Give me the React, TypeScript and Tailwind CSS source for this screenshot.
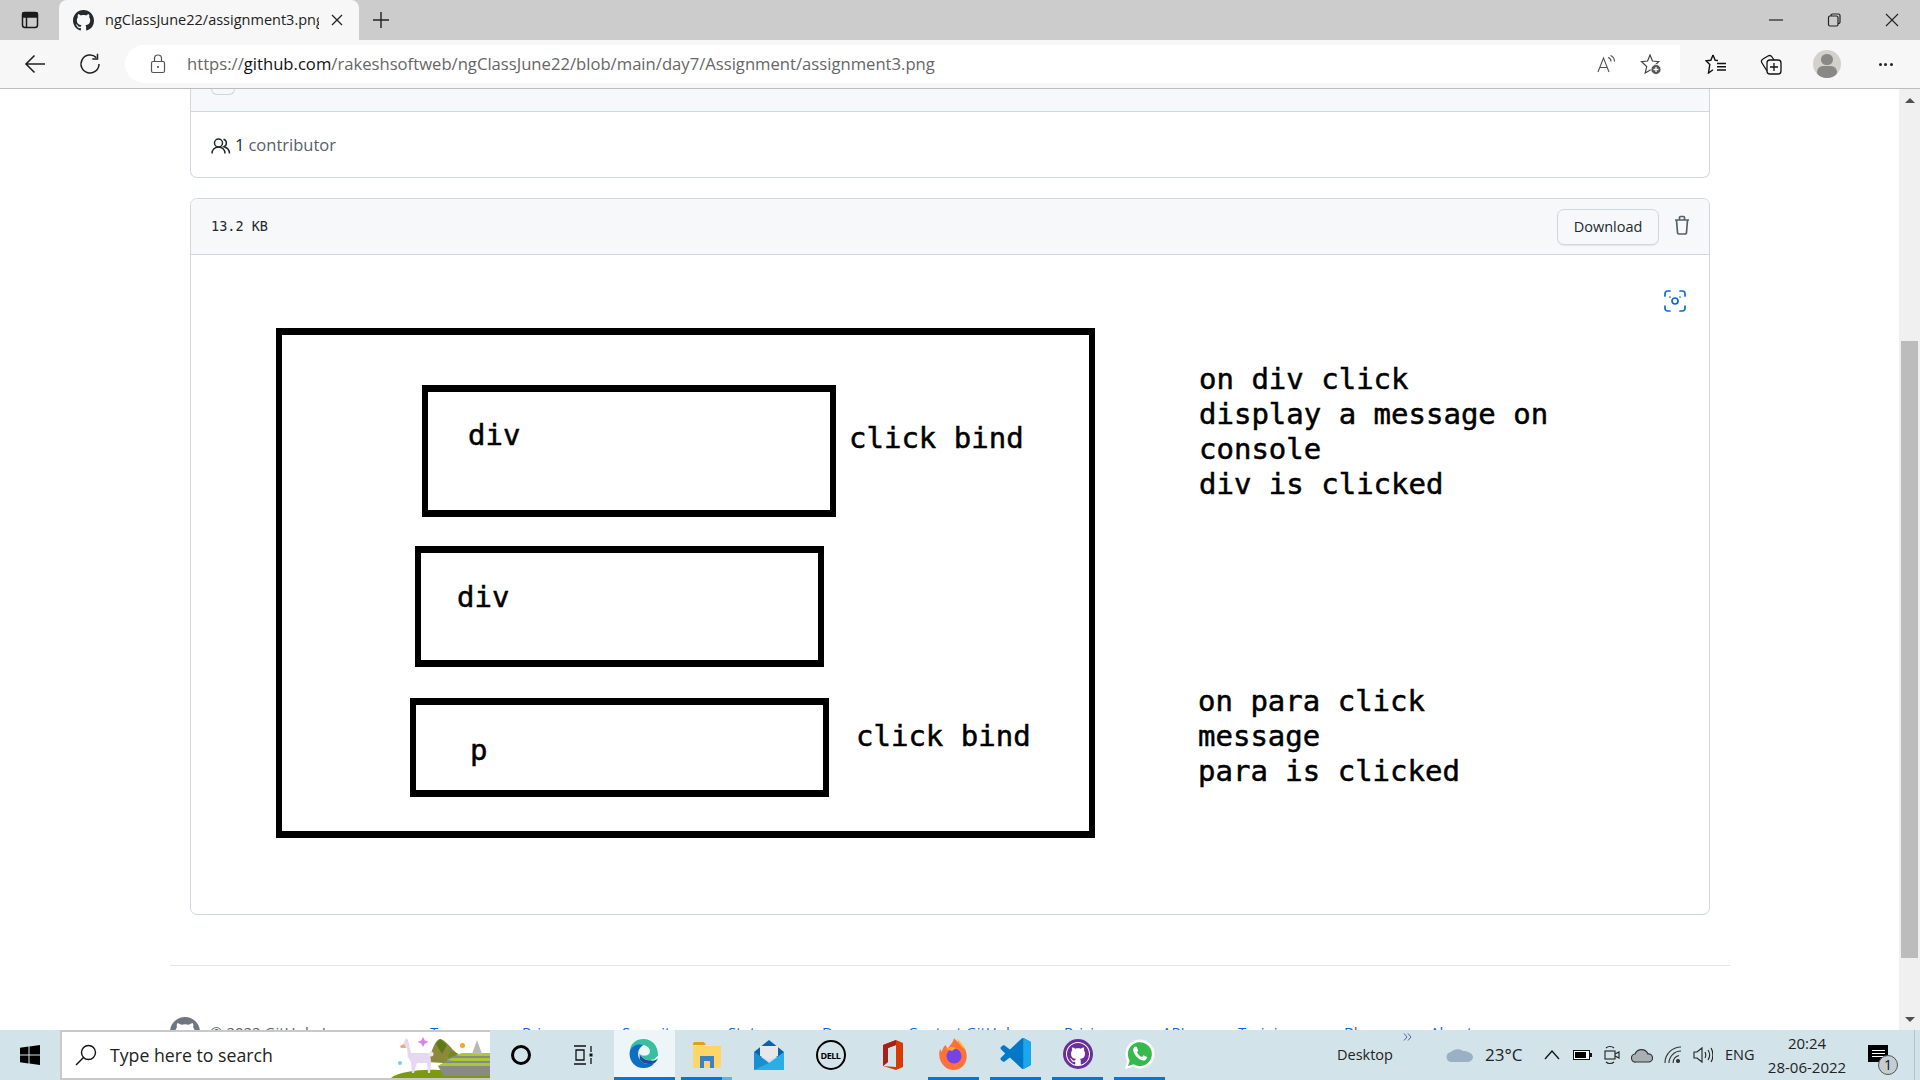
import React from "react";

const sans = "font-['Open_Sans','Noto_Sans',sans-serif]";

function WinBtn({ w, children }: { w: string; children: React.ReactNode }) {
  return <div className={`${w} h-10 flex items-center justify-center`}>{children}</div>;
}

function GithubMark({ size, color }: { size: number; color: string }) {
  return (
    <svg width={size} height={size} viewBox="0 0 16 16" fill={color}>
      <path d="M8 0C3.58 0 0 3.58 0 8c0 3.54 2.29 6.53 5.47 7.59.4.07.55-.17.55-.38 0-.19-.01-.82-.01-1.49-2.01.37-2.53-.49-2.69-.94-.09-.23-.48-.94-.82-1.13-.28-.15-.68-.52-.01-.53.63-.01 1.08.58 1.23.82.72 1.21 1.87.87 2.33.66.07-.52.28-.87.51-1.07-1.78-.2-3.64-.89-3.64-3.95 0-.87.31-1.59.82-2.15-.08-.2-.36-1.02.08-2.12 0 0 .67-.21 2.2.82.64-.18 1.32-.27 2-.27s1.36.09 2 .27c1.53-1.04 2.2-.82 2.2-.82.44 1.1.16 1.92.08 2.12.51.56.82 1.27.82 2.15 0 3.07-1.87 3.75-3.65 3.95.29.25.54.73.54 1.48 0 1.07-.01 1.93-.01 2.2 0 .21.15.46.55.38A8.01 8.01 0 0 0 16 8c0-4.42-3.58-8-8-8z" />
    </svg>
  );
}

function TabStrip() {
  return (
    <div className="h-10 bg-[#cccccc] flex shrink-0">
      <div className="w-[59px] flex items-center justify-center">
        <svg width="20" height="20" viewBox="0 0 20 20" fill="none" stroke="#1a1a1a" strokeWidth="1.5">
          <rect x="2.5" y="2.5" width="15" height="15" rx="2.5" />
          <path d="M3 3h14v4H3z" fill="#1a1a1a" />
          <path d="M6.5 7v10" />
        </svg>
      </div>
      <div className="w-[300px] h-10 bg-[#f7f7f7] rounded-t-lg flex items-center pl-[14px]">
        <GithubMark size={21} color="#24292f" />
        <span className={`ml-[11px] w-[214px] overflow-hidden whitespace-nowrap text-[14.5px] text-[#222] ${sans}`}>
          ngClassJune22/assignment3.png
        </span>
        <svg className="ml-[12px]" width="12" height="12" viewBox="0 0 12 12" stroke="#222" strokeWidth="1.3">
          <path d="M1 1l10 10M11 1L1 11" />
        </svg>
      </div>
      <div className="ml-[13px] w-[18px] flex items-center">
        <svg width="18" height="18" viewBox="0 0 18 18" stroke="#222" strokeWidth="1.4">
          <path d="M9 1v16M1 9h16" />
        </svg>
      </div>
      <div className="flex-1" />
      <div className="flex">
        <WinBtn w="w-[58px]">
          <svg width="14" height="2" viewBox="0 0 14 2"><path d="M0 1h14" stroke="#222" strokeWidth="1.2" /></svg>
        </WinBtn>
        <WinBtn w="w-[58px]">
          <svg width="14" height="14" viewBox="0 0 14 14" fill="none" stroke="#222" strokeWidth="1.2">
            <rect x="1.5" y="3" width="9.5" height="10" rx="1.5" />
            <path d="M4 3V2.5A1.5 1.5 0 0 1 5.5 1h6A1.5 1.5 0 0 1 13 2.5V9a1.5 1.5 0 0 1-2 1.4" />
          </svg>
        </WinBtn>
        <WinBtn w="w-[57px]">
          <svg width="14" height="14" viewBox="0 0 14 14" stroke="#222" strokeWidth="1.1"><path d="M1 1l12 12M13 1L1 13" /></svg>
        </WinBtn>
      </div>
    </div>
  );
}

function Toolbar() {
  return (
    <div className="h-[49px] bg-[#f7f7f7] border-b border-[#bdbdbd] flex items-center shrink-0">
      <div className="w-[70px] flex justify-center">
        <svg width="22" height="20" viewBox="0 0 22 20" fill="none" stroke="#222" strokeWidth="1.6">
          <path d="M21 10H2M10.5 1.5 2 10l8.5 8.5" />
        </svg>
      </div>
      <div className="w-[40px] flex justify-center">
        <svg width="22" height="22" viewBox="0 0 22 22" fill="none" stroke="#222" strokeWidth="1.5">
          <path d="M20 11a9 9 0 1 1-2.700-6.400" />
          <path d="M18.500 .8v5.200h-5.200" />
        </svg>
      </div>
      <div className="ml-[15px] w-[1555px] h-[38px] bg-white rounded-l-full rounded-r-[19px] flex items-center">
        <div className="w-[62px] flex justify-end pr-[21px]">
          <svg width="16" height="20" viewBox="0 0 16 20" fill="none" stroke="#555" strokeWidth="1.2">
            <rect x="1.5" y="7.500" width="13" height="11" rx="1.500" />
            <path d="M4.500 7.500V4.500a3.500 3.500 0 0 1 7 0v3" />
            <circle cx="8" cy="13" r="1" fill="#444" stroke="none" />
          </svg>
        </div>
        <span className={`text-[16.650px] text-[#666] whitespace-nowrap ${sans}`}>
          https://<span className="text-[#111]">github.com</span>/rakeshsoftweb/ngClassJune22/blob/main/day7/Assignment/assignment3.png
        </span>
        <div className="flex-1" />
        <svg width="20" height="18" viewBox="0 0 20 18" fill="none" stroke="#555" strokeWidth="1.100">
          <path d="M1 17 6.500 3l5.500 14M2.800 12.500h7.400" />
          <path d="M11 2.500c2 .5 3 2 3 4M13.500 .5c2.500 1 4 3.500 4 6" />
        </svg>
        <svg className="ml-[23px] mr-[18px]" width="22" height="21" viewBox="0 0 22 21" fill="none" stroke="#444" strokeWidth="1.200">
          <path d="M10 1 12.500 7l6.300.6-4.600 4.200 1 3-4.500 1-5.500 3.200 1.500-6.500L1.500 7.700 7.600 7z" />
          <circle cx="16" cy="15.500" r="5" fill="#555" stroke="#fff" strokeWidth=".8" />
          <path d="M16 13v5M13.500 15.500h5" stroke="#fff" strokeWidth="1.300" />
        </svg>
      </div>
      <div className="w-[58px] ml-[7px] flex justify-center">
        <svg width="22" height="20" viewBox="0 0 22 20" fill="none" stroke="#111" strokeWidth="1.400">
          <path d="M8 1 10.200 6.300l2.800.2M8 1 5.800 6.300 1 6.800l3.800 3.700L3.500 19 8 15.800" />
          <path d="M12 9.500h9M12 12.800h9M12 16h9" />
        </svg>
      </div>
      <div className="w-[52px] flex justify-center">
        <svg width="22" height="21" viewBox="0 0 22 21" fill="none" stroke="#111" strokeWidth="1.300">
          <rect x="7" y="6" width="14" height="14" rx="3" />
          <path d="M7 17 2 9c-1-1.500-.8-3 1-4l5-3c1.500-.8 3-.5 4 1l2 3" />
          <path d="M14 9v8M10 13h8" />
        </svg>
      </div>
      <div className="w-[60px] flex justify-center">
        <div className="w-[28px] h-[28px] rounded-full bg-[#d3d1cc] overflow-hidden flex flex-col items-center">
          <div className="mt-[4px] w-[12px] h-[12px] rounded-full bg-[#8a8886]" />
          <div className="mt-[1px] w-[20px] h-[14px] rounded-full bg-[#8a8886]" />
        </div>
      </div>
      <div className="flex-1 flex justify-center gap-[2.500px] pr-[6px]">
        <div className="w-[3px] h-[3px] rounded-full bg-[#222]" />
        <div className="w-[3px] h-[3px] rounded-full bg-[#222]" />
        <div className="w-[3px] h-[3px] rounded-full bg-[#222]" />
      </div>
    </div>
  );
}

function Diagram() {
  const mono = "font-['DejaVu_Sans_Mono',monospace] text-[29px] leading-[35px] text-black whitespace-pre [-webkit-text-stroke:0.5px_black]";
  const frame = "absolute border-x-[6px] border-y-[7px] border-black";
  return (
    <div className="relative h-[659px]">
      <div className={`${frame} left-[85px] top-[73px] w-[819px] h-[510px]`} />
      <div className={`${frame} left-[231px] top-[130px] w-[414px] h-[132px]`} />
      <div className={`${frame} left-[224px] top-[291px] w-[409px] h-[121px]`} />
      <div className={`${frame} left-[219px] top-[443px] w-[419px] h-[99px]`} />
      <div className={`absolute left-[277px] top-[163px] ${mono}`}>div</div>
      <div className={`absolute left-[266px] top-[325px] ${mono}`}>div</div>
      <div className={`absolute left-[279px] top-[478px] ${mono}`}>p</div>
      <div className={`absolute left-[658px] top-[166px] ${mono}`}>click bind</div>
      <div className={`absolute left-[665px] top-[464px] ${mono}`}>click bind</div>
      <div className={`absolute left-[1008px] top-[107px] ${mono}`}>
        {"on div click\ndisplay a message on\nconsole\ndiv is clicked"}
      </div>
      <div className={`absolute left-[1007px] top-[429px] ${mono}`}>
        {"on para click\nmessage\npara is clicked"}
      </div>
      <svg className="absolute left-[1473px] top-[35px]" width="22" height="22" viewBox="0 0 22 22" fill="none" stroke="#0969da" strokeWidth="1.700" strokeLinecap="round">
        <path d="M1 6V3.500A2.500 2.500 0 0 1 3.500 1H6M16 1h2.500A2.500 2.500 0 0 1 21 3.500V6M21 16v2.500a2.500 2.500 0 0 1-2.500 2.500H16M6 21H3.500A2.500 2.500 0 0 1 1 18.500V16" />
        <circle cx="11" cy="11" r="3" />
        <path d="M6 7v0M16 7v0" />
      </svg>
    </div>
  );
}

function Content() {
  const links = [
    ["Terms", "w-[92px]"],
    ["Privacy", "w-[100px]"],
    ["Security", "w-[106px]"],
    ["Status", "w-[94px]"],
    ["Docs", "w-[86px]"],
    ["Contact GitHub", "w-[156px]"],
    ["Pricing", "w-[98px]"],
    ["API", "w-[76px]"],
    ["Training", "w-[106px]"],
    ["Blog", "w-[86px]"],
    ["About", "w-[60px]"],
  ];
  return (
    <div className={`flex-1 bg-white overflow-hidden ${sans}`}>
      <div className="ml-[190px] w-[1520px] h-[89px] border-x border-b border-[#d0d7de] rounded-b-[7px]">
        <div className="h-[23px] bg-[#f6f8fa] border-b border-[#d0d7de] pl-[20px]">
          <div className="w-[24px] h-[6px] rounded-b-[12px] border border-t-0 border-[#d9d0e0]" />
        </div>
        <div className="h-[65px] pl-[20px] pt-[2px] flex items-center text-[16.500px] text-[#57606a]">
          <svg width="20" height="18" viewBox="0 0 20 18" fill="none" stroke="#24292f" strokeWidth="1.500">
            <circle cx="7.500" cy="6" r="4" />
            <path d="M1 16.500c0-4 3-6.500 6.500-6.500s6.500 2.500 6.500 6.500" />
            <path d="M12.500 2.200a4 4 0 0 1 .5 7.500c3 .8 5.500 3 5.500 6.800" />
          </svg>
          <span className="ml-[4px] font-medium text-[#24292f]">1</span>
          <span className="ml-[4px]">contributor</span>
        </div>
      </div>
      <div className="mt-[20px] ml-[190px] w-[1520px] h-[717px] border border-[#d0d7de] rounded-[7px] overflow-hidden">
        <div className="h-[56px] bg-[#f6f8fa] border-b border-[#d0d7de] flex items-center pl-[20px]">
          <span className="font-['DejaVu_Sans_Mono',monospace] text-[13.500px] text-[#24292f]">13.2 KB</span>
          <div className="flex-1" />
          <div className="w-[102px] h-[36px] border border-[#d0d7de] rounded-[7px] bg-[#f6f8fa] flex items-center justify-center text-[14.500px] font-medium text-[#24292f] shadow-[0_1px_0_rgba(27,31,36,0.08)]">
            Download
          </div>
          <svg className="ml-[15px] mr-[19px] mb-[3px]" width="16" height="20" viewBox="0 0 16 20" fill="none" stroke="#57606a" strokeWidth="1.700">
            <path d="M1 5h14M5.500 5V2.500A1 1 0 0 1 6.500 1.500h3a1 1 0 0 1 1 1V5M2.500 5l1 12.500A1.500 1.500 0 0 0 5 19h6a1.500 1.500 0 0 0 1.500-1.500L13.500 5" />
          </svg>
        </div>
        <Diagram />
      </div>
      <div className="mt-[50px] ml-[170px] w-[1560px] border-t border-[#dfe2e8]" />
      <div className="mt-[51px] ml-[170px] flex items-start">
        <div className="w-[40px]"><GithubMark size={30} color="#6e7781" /></div>
        <div className="w-[220px] mt-[4px] text-[15px] leading-[22px] text-[#57606a]">© 2022 GitHub, Inc.</div>
        <div className="flex mt-[4px] text-[15px] leading-[22px] text-[#0969da]">
          {links.map(([t, w]) => (
            <div key={t} className={`${w} whitespace-nowrap`}>{t}</div>
          ))}
        </div>
      </div>
    </div>
  );
}

function Scrollbar() {
  return (
    <div className="w-[21px] bg-[#f0f0f0] flex flex-col items-center">
      <div className="h-[22px] flex items-center justify-center">
        <div className="w-0 h-0 border-x-[5px] border-x-transparent border-b-[5px] border-b-[#505050]" />
      </div>
      <div className="mt-[230px] w-[17px] h-[617px] bg-[#bcbcbc]" />
      <div className="flex-1" />
      <div className="h-[22px] flex items-center justify-center">
        <div className="w-0 h-0 border-x-[5px] border-x-transparent border-t-[5px] border-t-[#505050]" />
      </div>
    </div>
  );
}

function AppCell({ w, children, under, active }: { w: string; children: React.ReactNode; under?: React.ReactNode; active?: boolean }) {
  return (
    <div className={`${w} h-[50px] flex flex-col items-center ${active ? "bg-[#eef5f8]" : ""}`}>
      <div className="flex-1 flex items-center justify-center">{children}</div>
      {under}
    </div>
  );
}

const Bar = () => <div className="w-full h-[3px] bg-[#0078d4]" />;

function Taskbar() {
  return (
    <div className={`h-[50px] bg-[#d3e3ea] flex items-stretch shrink-0 ${sans}`}>
      <div className="w-[60px] flex items-center justify-center">
        <svg width="20" height="20" viewBox="0 0 20 20" fill="#000">
          <path d="M0 2.800 8.500 1.600v8H0zM9.500 1.500 20 0v9.600H9.500zM0 10.500h8.500v8L0 17.200zM9.500 10.500H20V20L9.500 18.500z" />
        </svg>
      </div>
      <div className="w-[430px] bg-white border-2 border-[#c9c9c9] border-r-0 flex items-center overflow-hidden">
        <svg className="ml-[13px]" width="22" height="22" viewBox="0 0 22 22" fill="none" stroke="#111" strokeWidth="1.400">
          <circle cx="13.500" cy="8.500" r="7" />
          <path d="M8.500 13.500 1 21" />
        </svg>
        <span className="ml-[13px] text-[17.700px] text-[#222] whitespace-nowrap">Type here to search</span>
        <div className="flex-1" />
        <svg width="99" height="46" viewBox="-9 2 99 46" className="self-end">
          <path d="M-9 48C-2 42 20 39 38 40L90 38V48z" fill="#7c9a10" />
          <path d="M28 32 C32 20 35 10 40 9 C45 9 50 18 58 24V34z" fill="#8c8a3a" />
          <path d="M36 14 40 9 47 15 42 24z" fill="#5c7a18" />
          <path d="M50 20 58 24 56 32 48 30z" fill="#6f8a20" />
          <path d="M38 36 47 31V29L56 25 90 24V46H44z" fill="#8a8a84" />
          <path d="M56 25 62 23H90V26H60zM47 30 52 28H90V31H52zM38 36 44 33H90V36H44z" fill="#a8c83a" />
          <path d="M72 24 77 10 82 24z" fill="#b9b9b1" />
          <circle cx="62.500" cy="15.500" r="2.500" fill="#f5a623" />
          <path d="M23 7l1.800 3.500 3.700 1.500-3.700 1.500L23 17l-1.800-3.500-3.700-1.500 3.700-1.500z" fill="#d880ee" />
          <path d="M6 8l2 2 3 13h16l3 1 1 7-1 12h-2l-1-10-10 0-3 10H12l-1-11-3-5-1-9-4-1 1-4z" fill="#e6d8f0" />
          <circle cx="31" cy="24" r="2.500" fill="#efe6f4" />
          <path d="M0 16 4 14 6 18H1z" fill="#f4a76a" />
          <circle cx="0" cy="33" r="2" fill="#6fd3ee" />
        </svg>
      </div>
      <div className="w-[62px] flex items-center justify-center">
        <div className="w-[20px] h-[20px] rounded-full border-[3px] border-black" />
      </div>
      <div className="w-[62px] flex items-center justify-center">
        <svg width="20" height="20" viewBox="0 0 20 20" fill="none" stroke="#111" strokeWidth="1.300">
          <path d="M1 1h12M1 19h12M3 5h8v10H3zM18 1v6M18 13v6" />
          <rect x="16.500" y="8.500" width="3" height="3" fill="#111" stroke="none" />
        </svg>
      </div>
      <AppCell w="w-[61px]" active under={<Bar />}>
        <svg width="31" height="31" viewBox="0 0 32 32">
          <path d="M30 18C30 8 24 1 15 1 7 1 2 6 1 12c3-4 8-6 13-5 6 1 9 5 7 9-2 3-9 3-9 0 0 6 8 8 14 6z" fill="#35c1a0" />
          <path d="M1 13c-2 9 4 18 14 18 5 0 9-2 11-5-5 2-12 1-15-4-3-5-2-11 4-15C9 5 3 8 1 13z" fill="#0c6ec4" />
          <path d="M11 22c3 5 10 6 15 4 2-1 3-3 4-5-2 2-5 3-8 2-5 0-9-2-11-7z" fill="#1b4f9c" />
        </svg>
      </AppCell>
      <div className="w-[6px]" />
      <AppCell w="w-[51px]" under={<div className="w-full h-[3px] flex"><div className="w-[41px] bg-[#0078d4]" /><div className="flex-1 bg-[#69aee6]" /></div>}>
        <svg width="28" height="28" viewBox="0 0 28 28">
          <path d="M0 4a2 2 0 0 1 2-2h9l2 3H0z" fill="#e3a008" />
          <path d="M0 6h28v20a2 2 0 0 1-2 2H2a2 2 0 0 1-2-2z" fill="#fcd667" />
          <path d="M7 16h14v12h-4v-7h-6v7H7z" fill="#3b82c4" />
        </svg>
      </AppCell>
      <div className="w-[11px]" />
      <AppCell w="w-[51px]">
        <svg width="30" height="30" viewBox="0 0 30 30">
          <path d="M0 12 15 0l15 12v5H0z" fill="#0b62ad" />
          <path d="M6 6h18v10L15 20 6 16z" fill="#e8e8e8" />
          <path d="M0 12l15 11L30 12v18H0z" fill="#29aee8" />
          <path d="M0 30V12l15 11z" fill="#1a8ed2" />
        </svg>
      </AppCell>
      <div className="w-[11px]" />
      <AppCell w="w-[51px]">
        <div className="w-[30px] h-[30px] rounded-full border-2 border-black bg-transparent flex items-center justify-center font-bold text-[9px] leading-none tracking-[-0.5px] text-black">DELL</div>
      </AppCell>
      <div className="w-[11px]" />
      <AppCell w="w-[51px]">
        <svg width="24" height="30" viewBox="0 0 24 30">
          <path d="M2 5 15 0l7 3v24l-7 3-13-4 13 1V5L7 8v14l-5 4z" fill="#d83b01" />
          <path d="M2 5 15 0v5L7 8v14l-5 4z" fill="#a3211a" />
        </svg>
      </AppCell>
      <div className="w-[10px]" />
      <AppCell w="w-[51px]" under={<Bar />}>
        <svg width="30" height="36" viewBox="0 0 30 36">
          <path d="M15 2c2 3 8 6 11 11 3 6 2 13-2 17-5 5-13 5-18 1C1 27-1 20 1 13c1 1 1 2 2 3 0-3 2-6 4-7 0 2 1 3 2 3 2-3 5-5 6-10z" fill="#ff7139" />
          <path d="M18 2c3 4 8 8 9 14 0-2-2-4-4-5-2-3-4-5-5-9z" fill="#ffbd2e" />
          <circle cx="15" cy="20" r="7.500" fill="#7542e5" />
          <path d="M7 13c3-2 7-3 10-1l-4 3z" fill="#ffa436" />
        </svg>
      </AppCell>
      <div className="w-[11px]" />
      <AppCell w="w-[51px]" under={<Bar />}>
        <svg width="31" height="31" viewBox="0 0 100 100">
          <path d="M71 99c2 1 4 1 6 0l20-10c2-1 3-3 3-5V16c0-2-1-4-3-5L77 1c-2-1-5-1-7 1L32 37 15 24c-2-1-4-1-6 0l-6 5c-2 2-2 5 0 7l14 14L3 64c-2 2-2 5 0 7l6 5c2 1 4 1 6 0l17-13 38 35zM75 27 46 50l29 23z" fill="#0078c8" />
          <path d="M71 99c2 1 4 1 6 0l20-10c2-1 3-3 3-5V16c0-2-1-4-3-5L77 1c-2-1-5-1-7 1 3-2 5 0 5 2v92c0 2-2 4-4 3z" fill="#1ca7ec" />
        </svg>
      </AppCell>
      <div className="w-[11px]" />
      <AppCell w="w-[51px]" under={<Bar />}>
        <div className="w-[30px] h-[30px] rounded-full border-[3px] border-[#6c2e9c] bg-white flex items-center justify-center">
          <GithubMark size={22} color="#6c2e9c" />
        </div>
      </AppCell>
      <div className="w-[11px]" />
      <AppCell w="w-[51px]" under={<Bar />}>
        <svg width="32" height="32" viewBox="0 0 32 32">
          <path d="M1 31l2.200-8A14.500 14.500 0 1 1 9 28.800z" fill="#fff" />
          <path d="M4 28l1.700-5.500A12 12 0 1 1 9.500 26.300z" fill="#38b94e" />
          <path d="M11 8.500c-1 .5-2 2-1.800 4 .4 3.500 4.500 8.500 9 9.800 2 .6 3.800-.4 4.400-1.600.4-.8.400-1.500.3-1.700l-3.400-1.700-1.500 1.700c-2.200-.7-4-2.500-5-4.800l1.300-1.500-1.500-3.700z" fill="#fff" />
        </svg>
      </AppCell>
      <div className="w-[172px]" />
      <div className="relative w-[89px] flex items-center text-[14.500px] text-[#222]">
        Desktop
        <svg className="absolute left-[66px] top-[3px]" width="10" height="8" viewBox="0 0 10 8" fill="none" stroke="#5b5ea6" strokeWidth="1">
          <path d="M1 .5 4 4 1 7.500M5 .5 8 4 5 7.500" />
        </svg>
      </div>
      <div className="w-[20px]" />
      <svg className="self-center" width="28" height="16" viewBox="0 0 28 16">
        <path d="M6 15a5 5 0 0 1-1-10c2-3 9-4 12-1 3-.5 10 2 10 6 0 3-3 5-6 5z" fill="#9ab0c4" />
      </svg>
      <div className="w-[42px] ml-[11px] flex items-center text-[17px] text-[#222] whitespace-nowrap">23°C</div>
      <div className="w-[20px] ml-[15px] flex items-center justify-center">
        <svg width="16" height="10" viewBox="0 0 16 10" fill="none" stroke="#111" strokeWidth="1.300"><path d="M1 9l7-8 7 8" /></svg>
      </div>
      <div className="w-[30px] ml-[5px] flex items-center justify-center">
        <svg width="19" height="10" viewBox="0 0 19 10"><rect x=".5" y=".5" width="16" height="9" fill="#fff" stroke="#111" /><rect x="2" y="2" width="11" height="6" fill="#000" /><rect x="17" y="3" width="2" height="4" fill="#111" /></svg>
      </div>
      <div className="w-[30px] flex items-center justify-center">
        <svg width="16" height="20" viewBox="0 0 16 20" fill="none" stroke="#222" strokeWidth="1.100">
          <path d="M2 3c2-2 6-2 8 0M2 17c2 2 6 2 8 0" /><rect x="1" y="6" width="10" height="8" /><path d="M11 9l4-2v6l-4-2" />
        </svg>
      </div>
      <div className="w-[30px] flex items-center justify-center">
        <svg width="22" height="15" viewBox="0 0 22 15" stroke="#333" strokeWidth="1.200"><path d="M5 14a4 4 0 0 1-1-8 7 7 0 0 1 13 0 4 4 0 0 1 1 8z" fill="#a8b0b4" /></svg>
      </div>
      <div className="w-[31px] flex items-center justify-center">
        <svg width="18" height="18" viewBox="0 0 18 18" fill="none" stroke="#333" strokeWidth="1.100">
          <path d="M1 17A16 16 0 0 1 17 1M5 17A12 12 0 0 1 17 5M9 17a8 8 0 0 1 6-7.500" /><circle cx="14" cy="15" r="1.500" fill="#333" />
        </svg>
      </div>
      <div className="w-[30px] flex items-center justify-center">
        <svg width="20" height="18" viewBox="0 0 20 18" fill="none" stroke="#222" strokeWidth="1.100">
          <path d="M1 6h3l5-4v14l-5-4H1zM12 6c1 2 1 4 0 6M15 4c2 3 2 7 0 10M18 2c2.500 4 2.500 10 0 14" />
        </svg>
      </div>
      <div className="w-[34px] ml-[7px] flex items-center text-[14.500px] text-[#222] whitespace-nowrap">ENG</div>
      <div className="w-[96px] flex flex-col items-center justify-center text-[15px] leading-[24px] text-[#222]">
        <div>20:24</div>
        <div>28-06-2022</div>
      </div>
      <div className="relative flex-1 mr-[5px] border-r border-[#b4c2c9]">
        <div className="absolute left-[13px] top-[15px] w-[20px] h-[17px] bg-black flex flex-col items-center justify-center gap-[2px]">
          <div className="w-[13px] h-[1px] bg-white" /><div className="w-[13px] h-[1px] bg-white" /><div className="w-[13px] h-[1px] bg-white" />
        </div>
        <div className="absolute left-[23px] top-[25px] w-[20px] h-[20px] rounded-full border border-[#555] bg-[#c4cdd1] flex items-center justify-center text-[14px] leading-none text-[#111]">1</div>
      </div>
    </div>
  );
}

export default function App() {
  return (
    <div className="w-[1920px] h-[1080px] flex flex-col overflow-hidden bg-white">
      <TabStrip />
      <Toolbar />
      <div className="flex-1 flex min-h-0">
        <Content />
        <Scrollbar />
      </div>
      <Taskbar />
    </div>
  );
}
